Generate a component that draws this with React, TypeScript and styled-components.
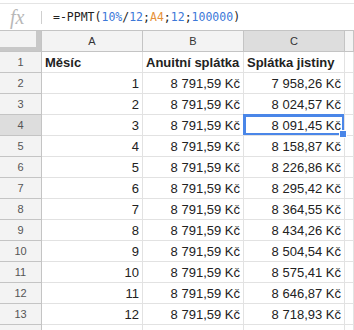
import React from 'react';
import styled, { createGlobalStyle } from 'styled-components';

const GlobalStyle = createGlobalStyle`
  html, body {
    margin: 0;
    padding: 0;
    background: #fff;
    overflow: hidden;
  }
  body {
    font-family: 'Liberation Sans', Arial, sans-serif;
  }
`;

const FormulaBar = styled.div`
  height: 26px;
  margin-top: 3px;
  border-top: 1px solid #e4e4e4;
  border-bottom: 1px solid #c4c4c4;
  display: flex;
  align-items: center;
`;

const Fx = styled.span`
  width: 41px;
  padding-left: 10px;
  box-sizing: border-box;
  font-family: 'Liberation Serif', 'DejaVu Serif', serif;
  font-style: italic;
  font-size: 20px;
  color: #b8b8b8;
`;

const Divider = styled.span`
  width: 1px;
  height: 13px;
  background: #cfcfcf;
`;

const Formula = styled.span`
  margin-left: 11px;
  font-family: 'DejaVu Sans Mono', monospace;
  font-size: 11.5px;
  color: #222;
  white-space: pre;
`;

const Token = styled.span<{ $kind: 'num' | 'ref' }>`
  color: ${(p) => (p.$kind === 'num' ? '#3c78d8' : '#e69138')};
`;

const Grid = styled.div`
  display: grid;
  grid-template-columns: 42px 101px 101px 101px 1fr;
  grid-auto-rows: 21px;
`;

const Corner = styled.div`
  background: #f3f3f3;
  border-right: 1px solid #c4c4c4;
  border-bottom: 1px solid #c4c4c4;
  box-shadow: inset -5px -4px 0 #c8c8c8;
`;

const ColHeader = styled.div<{ $active?: boolean }>`
  background: ${(p) => (p.$active ? '#dddddd' : '#f3f3f3')};
  border-right: 1px solid #c4c4c4;
  border-bottom: 1px solid #c4c4c4;
  display: flex;
  align-items: center;
  justify-content: center;
  font-size: 11px;
  color: #333;
`;

const RowHeader = styled.div<{ $active?: boolean }>`
  background: ${(p) => (p.$active ? '#dddddd' : '#f3f3f3')};
  border-right: 1px solid #c4c4c4;
  border-bottom: 1px solid #c4c4c4;
  display: flex;
  align-items: center;
  justify-content: center;
  font-size: 11px;
  color: #555;
`;

const Cell = styled.div<{ $bold?: boolean; $left?: boolean; $selected?: boolean }>`
  position: relative;
  border-right: 1px solid #e2e2e2;
  border-bottom: 1px solid #e2e2e2;
  display: flex;
  align-items: center;
  justify-content: ${(p) => (p.$left ? 'flex-start' : 'flex-end')};
  padding: 0 3px;
  font-size: 13px;
  font-weight: ${(p) => (p.$bold ? 700 : 400)};
  color: #222;
  white-space: nowrap;
  box-shadow: ${(p) => (p.$selected ? 'inset 0 0 0 2px #4a86e8, -1px -1px 0 0 #4a86e8' : 'none')};
`;

const Handle = styled.span`
  position: absolute;
  right: -3px;
  bottom: -3px;
  width: 6px;
  height: 6px;
  background: #4a86e8;
  border: 1px solid #fff;
  z-index: 2;
`;

const rows: [number, string][] = [
  [1, '7 958,26 Kč'],
  [2, '8 024,57 Kč'],
  [3, '8 091,45 Kč'],
  [4, '8 158,87 Kč'],
  [5, '8 226,86 Kč'],
  [6, '8 295,42 Kč'],
  [7, '8 364,55 Kč'],
  [8, '8 434,26 Kč'],
  [9, '8 504,54 Kč'],
  [10, '8 575,41 Kč'],
  [11, '8 646,87 Kč'],
  [12, '8 718,93 Kč'],
];

const App = () => (
  <>
    <GlobalStyle />
    <FormulaBar>
      <Fx>fx</Fx>
      <Divider />
      <Formula>
        =-PPMT(<Token $kind="num">10%</Token>/<Token $kind="num">12</Token>;
        <Token $kind="ref">A4</Token>;<Token $kind="num">12</Token>;
        <Token $kind="num">100000</Token>)
      </Formula>
    </FormulaBar>
    <Grid>
      <Corner />
      <ColHeader>A</ColHeader>
      <ColHeader>B</ColHeader>
      <ColHeader $active>C</ColHeader>
      <ColHeader />

      <RowHeader>1</RowHeader>
      <Cell $bold $left>Měsíc</Cell>
      <Cell $bold $left>Anuitní splátka</Cell>
      <Cell $bold $left>Splátka jistiny</Cell>
      <Cell />

      {rows.map(([month, principal], i) => {
        const rowNo = i + 2;
        const selected = rowNo === 4;
        return (
          <React.Fragment key={rowNo}>
            <RowHeader $active={selected}>{rowNo}</RowHeader>
            <Cell>{month}</Cell>
            <Cell>8 791,59 Kč</Cell>
            <Cell $selected={selected}>
              {principal}
              {selected && <Handle />}
            </Cell>
            <Cell />
          </React.Fragment>
        );
      })}

      {/* next row only peeks in at the bottom edge */}
      <RowHeader />
      <Cell />
      <Cell />
      <Cell />
      <Cell />
    </Grid>
  </>
);

export default App;
